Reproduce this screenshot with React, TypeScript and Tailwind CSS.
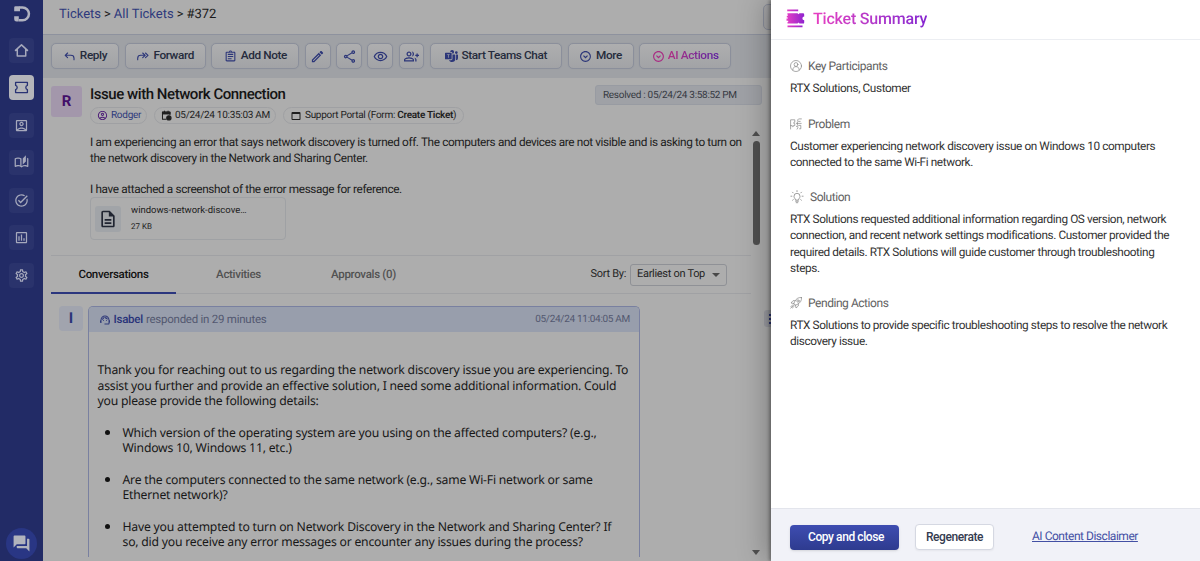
import React from 'react';
import {
  MdOutlineAccountBox,
  MdOutlineAccountCircle,
  MdOutlineAssessment,
  MdOutlineAssignment,
  MdOutlineAutoStories,
  MdOutlineDescription,
  MdOutlineEdit,
  MdOutlineExpandCircleDown,
  MdOutlineGroupAdd,
  MdOutlineRemoveRedEye,
  MdOutlineSettings,
  MdOutlineShare,
  MdQuestionAnswer,
  MdSupportAgent,
  MdTaskAlt,
  MdWebAsset,
} from 'react-icons/md';
import { BsMicrosoftTeams } from 'react-icons/bs';

type IconProps = { className?: string };

const stroke = { fill: 'none', stroke: 'currentColor', strokeLinecap: 'round', strokeLinejoin: 'round' } as const;

const LogoIcon = ({ className }: IconProps) => (
  <svg viewBox="0 0 18 18" className={className} fill="none" stroke="currentColor">
    <path d="M6.500 2.400h3a6.400 6.400 0 0 1 0 12.900H6" strokeWidth="2.500" />
    <path d="M2.500 1.200H7v5H1.200V2.500a1.300 1.300 0 0 1 1.300-1.300zM1.200 11.200h4.600v5.300H3.500a2.300 2.300 0 0 1-2.300-2.300z" fill="currentColor" stroke="none" />
  </svg>
);

const HomeIcon = ({ className }: IconProps) => (
  <svg viewBox="0 0 16 16" className={className} {...stroke} strokeWidth="1.6">
    <path d="M1.600 7.900 8 2l6.400 5.900M3.500 6.700v7.100h9V6.700" />
  </svg>
);

const TicketIcon = ({ className }: IconProps) => (
  <svg viewBox="0 0 16 16" className={className} {...stroke} strokeWidth="1.4">
    <path d="M1.700 2.600h12.600v3.100a2.400 2.400 0 0 0 0 4.600v3.100H1.700v-3.100a2.400 2.400 0 0 0 0-4.600z" />
  </svg>
);

const ReplyIcon = ({ className }: IconProps) => (
  <svg viewBox="0 0 13 13" className={className} {...stroke} strokeWidth="1.1">
    <path d="M4.600 3 2.200 5.300l2.400 2.400M2.400 5.300h5.500c2 0 3.100 1 3.100 2.900v1.600" />
  </svg>
);

const ForwardIcon = ({ className }: IconProps) => (
  <svg viewBox="0 0 13 13" className={className} {...stroke} strokeWidth="1.1">
    <path d="M9.500 3 12 5.300 9.500 7.700M6.700 3l2.500 2.300-2.500 2.400M9 5.300H4.800c-2 0-3.100 1-3.100 2.900v1.600" />
  </svg>
);

const CalendarIcon = ({ className }: IconProps) => (
  <svg viewBox="0 0 12 12" className={className} {...stroke} strokeWidth="1.1">
    <path d="M5.500 10.200H1.600V2.300h8.200v3M1.600 4.200h8.200M3.700 1v1.600M7.700 1v1.600" />
    <path d="M1.600 2.500h8.200v1.600H1.600z" fill="currentColor" />
    <circle cx="8.600" cy="8.600" r="2.400" fill="currentColor" />
  </svg>
);

const SummaryIcon = ({ className }: IconProps) => (
  <svg viewBox="0 0 19 19" className={className}>
    <defs>
      <linearGradient id="summary" x1="0" y1="0" x2="19" y2="0" gradientUnits="userSpaceOnUse">
        <stop offset="0" stopColor="#e83fc4" />
        <stop offset="1" stopColor="#8b22cf" />
      </linearGradient>
    </defs>
    <g fill="url(#summary)">
      <path d="M1.200.5h11v1.700h-11zM1.500 16.600h15v1.700h-15z" />
      <path d="M1.500 4.200h10l1 1 1-1H17a1.200 1.200 0 0 1 1.200 1.200v2.200a1.800 1.800 0 0 0 0 3.600v2.200a1.200 1.200 0 0 1-1.200 1.200h-3.500l-1-1-1 1h-10v-1.600h.7v-1.300H.5V9.600h1.400V8.400H.8V6.800h1.100V5.600h-.7z" />
    </g>
  </svg>
);

const ParticipantIcon = ({ className }: IconProps) => (
  <svg viewBox="0 0 12 12" className={className} {...stroke} strokeWidth=".7">
    <circle cx="6" cy="6" r="5.500" />
    <circle cx="6" cy="4.500" r="1.900" />
    <path d="M2.800 10c0-2.200 1.300-3.400 3.200-3.400S9.200 7.800 9.200 10" />
  </svg>
);

const ProblemIcon = ({ className }: IconProps) => (
  <svg viewBox="0 0 12 12" className={className} {...stroke} strokeWidth=".7">
    <path d="M.6 11V1.800h4.200v2.500c-1.500-.6-1.700 1.900 0 1.300v2H3.400c.6 1.500-1.700 1.500-1.200 0H.6M11.400.9H9.200c-2 0-2 2.700-.2 2.500h1.200M6.400 5.400h4.800M7.400 3.800v3.400M6.300 8.400c1.200-.9 2 .2 1.500 1.300l-.7 1.400M8.600 7.400h2.200v3.400H9.600" />
  </svg>
);

const BulbIcon = () => (
  <svg viewBox="0 0 14 14" className="h-[14px] w-[14px] text-[#858585]" {...stroke} strokeWidth=".8">
    <path d="M5.500 9.700c0-1.100-1.500-1.600-1.500-3.400a3 3 0 0 1 6 0c0 1.800-1.500 2.300-1.500 3.400zM5.600 11.200h2.800M6.200 12.700h1.600M7 .6v1M2.500 2.200l.7.700M11.500 2.200l-.7.700M.9 6.200h1M12.100 6.200h1M2.600 10.200l.7-.6M11.400 10.200l-.7-.6" />
  </svg>
);

const RocketIcon = ({ className }: IconProps) => (
  <svg viewBox="0 0 12 12" className={className} {...stroke} strokeWidth=".7">
    <path d="M11.500.5c-3-.2-5 .8-6.800 4L3.800 6.700l1.500 1.500 2.200-.9c3.200-1.800 4.200-3.800 4-6.800zM5.200 3.700H3L1 6l2.900.5M8.300 6.800V9L6 11l-.5-2.900M3 7.600.6 10M4.400 9 2.400 11M3.500 8.500.8 11.200" />
    <circle cx="8" cy="4" r="1.200" />
  </svg>
);

const NavItem = ({ icon: Icon, active }: { icon: any; active?: boolean }) => (
  <div
    className={
      active
        ? 'flex h-[25px] w-[25px] items-center justify-center rounded bg-[#b4b5ba] text-[#293374]'
        : 'flex h-[25px] w-[25px] items-center justify-center rounded bg-[#2a336c] text-[#a6a9bc]'
    }
  >
    <Icon className="h-[15px] w-[15px]" />
  </div>
);

const ToolButton = ({ icon: Icon, label, width }: { icon: any; label?: string; width: string }) => (
  <button
    className={`${width} flex h-[26px] shrink-0 items-center justify-center gap-[4px] rounded-[5px] border border-[#8b8f9b] bg-linear-to-b from-[#aeaeaf] to-[#a2a3a6] text-[11.8px] font-medium tracking-[-0.38px] whitespace-nowrap text-[#252b3c] shadow-[0_0_1px_#8b8f9b]`}
  >
    <Icon className={label ? 'h-[13px] w-[13px] shrink-0 text-[#2c3679]' : 'h-[15px] w-[15px] shrink-0 text-[#2c3679]'} />
    {label && <span>{label}</span>}
  </button>
);

const Section = ({ icon: Icon, title, className, children }: { icon: any; title: string; className?: string; children: React.ReactNode }) => (
  <section className={className}>
    <div className="flex h-4 items-center gap-1.5 text-[12px] tracking-[-0.45px] text-[#626262]">
      <Icon className="h-3 w-3 text-[#858585]" />
      <h3>{title}</h3>
    </div>
    <p className="mt-[6px] text-[11.8px] leading-[16.400px] tracking-[-0.4px] whitespace-nowrap text-[#333]">{children}</p>
  </section>
);

const Sidebar = () => (
  <aside className="flex w-[43px] shrink-0 flex-col items-center bg-[#222b66] pt-[5px] pb-[2px]">
    <LogoIcon className="h-[18px] w-[18px] text-[#b0b2c0]" />
    <nav className="mt-[14.500px] flex flex-col gap-[12.500px]">
      <NavItem icon={HomeIcon} />
      <NavItem icon={TicketIcon} active />
      <NavItem icon={MdOutlineAccountBox} />
      <NavItem icon={MdOutlineAutoStories} />
      <NavItem icon={MdTaskAlt} />
      <NavItem icon={MdOutlineAssessment} />
      <NavItem icon={MdOutlineSettings} />
    </nav>
    <div className="mt-auto flex h-[31px] w-[31px] items-center justify-center rounded-full bg-[#293684]">
      <MdQuestionAnswer className="h-[19px] w-[19px] text-[#b1b3bd]" />
    </div>
  </aside>
);

const Toolbar = () => (
  <div className="flex h-[44px] items-center gap-[5.700px] border-t border-[#8e929e] bg-[#9fa1a5] pb-px pl-2">
    <ToolButton icon={ReplyIcon} label="Reply" width="w-[68px]" />
    <ToolButton icon={ForwardIcon} label="Forward" width="w-[81px]" />
    <ToolButton icon={MdOutlineAssignment} label="Add Note" width="w-[88px]" />
    <ToolButton icon={MdOutlineEdit} width="w-[25.500px]" />
    <ToolButton icon={MdOutlineShare} width="w-[25.500px]" />
    <ToolButton icon={MdOutlineRemoveRedEye} width="w-[25.500px]" />
    <ToolButton icon={MdOutlineGroupAdd} width="w-[25.500px]" />
    <ToolButton icon={BsMicrosoftTeams} label="Start Teams Chat" width="w-[132px]" />
    <ToolButton icon={MdOutlineExpandCircleDown} label="More" width="w-[66px]" />
    <button className="flex h-[26px] w-[92px] shrink-0 items-center justify-center gap-[3px] rounded-[5px] border border-[#8b8f9b] bg-linear-to-b from-[#aeaeaf] to-[#a2a3a6] text-[11.8px] font-medium tracking-[-0.35px] shadow-[0_0_1px_#8b8f9b]">
      <MdOutlineExpandCircleDown className="h-[13px] w-[13px] text-[#a92b83]" />
      <span className="bg-linear-to-r from-[#b02c83] to-[#5c1aa0] bg-clip-text text-transparent">AI Actions</span>
    </button>
  </div>
);

const pill = 'flex h-[17px] items-center gap-[3px] rounded-full border border-[#9fa0a3] pl-[6px] text-[10px] tracking-[-0.29px] whitespace-nowrap';

const TicketHeader = () => (
  <div className="flex h-[177px] pt-[8px] pl-2">
    <div className="flex h-[31px] w-[31px] shrink-0 items-center justify-center rounded-[3px] bg-[#a397ab] text-[15px] font-bold text-[#420e69]">R</div>
    <div className="ml-2 w-[653px] shrink-0">
      <div className="h-[21px]">
        <h1 className="text-[15px] leading-[17px] font-medium tracking-[-0.45px] whitespace-nowrap text-[#141414]">Issue with Network Connection</h1>
      </div>
      <div className="flex gap-[7px]">
        <span className={`${pill} w-[57px] text-[#2f3a7c]`}>
          <MdOutlineAccountCircle className="h-[11px] w-[11px] text-[#4b1a77]" />
          Rodger
        </span>
        <span className={`${pill} w-[122px] text-[#1e1e1e]`}>
          <CalendarIcon className="h-[11px] w-[11px] shrink-0" />
          05/24/24 10:35:03 AM
        </span>
        <span className={`${pill} w-[181px] text-[#1e1e1e]`}>
          <MdWebAsset className="h-[12px] w-[12px] shrink-0" />
          <span>Support Portal (Form: <b className="font-semibold">Create Ticket</b>)</span>
        </span>
      </div>
      <p className="mt-[11px] text-[11.8px] leading-[15.600px] tracking-[-0.375px] whitespace-nowrap text-[#1c1c1c]">
        I am experiencing an error that says network discovery is turned off. The computers and devices are not visible and is asking to turn on
        <br />
        the network discovery in the Network and Sharing Center.
        <br />
        <br />
        I have attached a screenshot of the error message for reference.
      </p>
      <div className="flex h-[43px] w-[196px] items-center gap-[10px] rounded border border-[#9fa1a4] pl-[4px] text-[#1c1c1c]">
        <div className="flex h-[26px] w-[26px] items-center justify-center rounded-[3px] bg-[#a1a4a8]">
          <MdOutlineDescription className="h-[20px] w-[20px] text-[#202532]" />
        </div>
        <div>
          <div className="text-[9.500px] leading-4">windows-network-discove…</div>
          <div className="text-[8px] leading-4">27 KB</div>
        </div>
      </div>
    </div>
  </div>
);

const Tabs = () => (
  <div className="ml-2 flex h-[39px] w-[700px] border-y border-[#a0a1a4] text-[11.500px] font-medium tracking-[-0.3px] text-[#525252]">
    <div className="-mb-px flex w-[125px] items-center justify-center border-b-2 border-[#2b367e] pt-[2px] text-[#111]">Conversations</div>
    <div className="flex w-[125px] items-center justify-center">Activities</div>
    <div className="flex w-[125px] items-center justify-center">Approvals (0)</div>
    <div className="ml-auto flex items-center gap-1 pr-[24px] text-[11px] font-normal text-[#252525]">
      Sort By:
      <div className="flex h-[22px] w-[97px] items-center justify-between rounded-[3px] border border-[#8f9196] px-[6px] whitespace-nowrap">
        Earliest on Top
        <span className="border-x-4 border-t-[4.500px] border-x-transparent border-t-[#484848]" />
      </div>
    </div>
  </div>
);

const questions = [
  ['Which version of the operating system are you using on the affected computers? (e.g.,', 'Windows 10, Windows 11, etc.)'],
  ['Are the computers connected to the same network (e.g., same Wi-Fi network or same', 'Ethernet network)?'],
  ['Have you attempted to turn on Network Discovery in the Network and Sharing Center? If', 'so, did you receive any error messages or encounter any issues during the process?'],
];

const Conversation = () => (
  <div className="mt-3 flex h-[251px] overflow-hidden pl-4">
    <div className="flex h-[25px] w-[24px] shrink-0 items-center justify-center rounded bg-[#a1a4ae] text-[15px] font-bold text-[#2a3478]">I</div>
    <article className="ml-[4.500px] w-[552.500px] shrink-0 rounded-t-[5px] border border-b-0 border-[#7980a0]">
      <header className="flex h-[25px] items-center rounded-t bg-[#989eac] pr-[9px] pl-[10px] text-[11.500px] tracking-[-0.25px] text-[#535870]">
        <MdSupportAgent className="mr-[3px] h-[12px] w-[12px] text-[#2f3a7a]" />
        <span className="mr-[3px] font-medium text-[#29347a]">Isabel</span> responded in 29 minutes
        <span className="ml-auto text-[10px] tracking-[-0.3px]">05/24/24 11:04:05 AM</span>
      </header>
      <div className="pt-[30px] pl-[9px] font-['Noto_Sans'] text-[12.2px] leading-[15.650px] tracking-[-0.21px] whitespace-nowrap text-[#171717]">
        <p>
          Thank you for reaching out to us regarding the network discovery issue you are experiencing. To
          <br />
          assist you further and provide an effective solution, I need some additional information. Could
          <br />
          you please provide the following details:
        </p>
        <ul className="mt-[15.650px] flex flex-col gap-[15.650px]">
          {questions.map(([first, second]) => (
            <li key={first} className="flex pl-[7px]">
              <span className="mt-[5.500px] mr-[13px] h-[5px] w-[5px] shrink-0 rounded-full bg-[#111]" />
              <span>
                {first}
                <br />
                {second}
              </span>
            </li>
          ))}
        </ul>
      </div>
    </article>
    <div className="mt-[4px] ml-[124px] flex h-[17px] w-[17px] shrink-0 items-center rounded-[3px] bg-[#9b9ca2] pl-[5px]">
      <div className="flex flex-col gap-[2px]">
        <i className="h-[2px] w-[2px] bg-[#2a3478]" />
        <i className="h-[2px] w-[2px] bg-[#2a3478]" />
        <i className="h-[2px] w-[2px] bg-[#2a3478]" />
      </div>
    </div>
  </div>
);

const SummaryDrawer = () => (
  <aside className="relative z-10 flex w-[429px] shrink-0 flex-col bg-white shadow-[-2px_0_3px_rgba(0,0,0,0.3),-6px_0_26px_rgba(0,0,0,0.25)]">
    <header className="flex h-[40px] items-center gap-[8px] border-b border-[#eceef2] pb-[2px] pl-[15px]">
      <SummaryIcon className="h-[19px] w-[19px]" />
      <h2 className="bg-linear-to-r from-[#e83fc1] to-[#8524d0] bg-clip-text text-[16px] font-medium tracking-[-0.2px] text-transparent">Ticket Summary</h2>
    </header>
    <div className="flex-1 pt-[18px] pl-[19px]">
      <Section icon={ParticipantIcon} title="Key Participants" className="h-[58px]">
        RTX Solutions, Customer
      </Section>
      <Section icon={ProblemIcon} title="Problem" className="h-[73px]">
        Customer experiencing network discovery issue on Windows 10 computers
        <br />
        connected to the same Wi-Fi network.
      </Section>
      <Section icon={BulbIcon} title="Solution" className="h-[106px]">
        RTX Solutions requested additional information regarding OS version, network
        <br />
        connection, and recent network settings modifications. Customer provided the
        <br />
        required details. RTX Solutions will guide customer through troubleshooting
        <br />
        steps.
      </Section>
      <Section icon={RocketIcon} title="Pending Actions">
        RTX Solutions to provide specific troubleshooting steps to resolve the network
        <br />
        discovery issue.
      </Section>
    </div>
    <footer className="flex h-[53px] items-center border-t border-[#e3e5ec] bg-[#f1f2f8] pt-[4px] pl-[19px] text-[12px] tracking-[-0.42px]">
      <button className="h-[25px] w-[109px] rounded bg-linear-to-b from-[#3e4db1] to-[#2e3b8f] pl-[3px] font-medium text-white shadow-sm">Copy and close</button>
      <button className="ml-4 h-[26px] w-[79px] rounded border border-[#d5d8e2] bg-white font-medium text-[#343b50] shadow-xs">Regenerate</button>
      <a className="ml-[38px] pb-[2px] tracking-[-0.47px] text-[#4350a4] underline">AI Content Disclaimer</a>
    </footer>
  </aside>
);

export default function App() {
  return (
    <div className="flex h-[561px] w-[1200px] overflow-hidden bg-[#adadad] font-['Roboto',sans-serif] [text-rendering:geometricPrecision]">
      <Sidebar />
      <main className="relative w-[728px] shrink-0 overflow-hidden">
        <div className="flex h-[34px] items-center gap-[3px] pb-[5px] pl-4 text-[13px] text-[#1a1a1a]">
          <span className="text-[#2e397c]">Tickets</span>
          <span>&gt;</span>
          <span className="text-[#2e397c]">All Tickets</span>
          <span>&gt;</span>
          <span>#372</span>
          <button className="mt-[5px] -mr-4 ml-auto h-[26px] w-6 rounded-[5px] border border-[#8b8f9b] bg-[#a5a5a7]" />
        </div>
        <Toolbar />
        <TicketHeader />
        <Tabs />
        <Conversation />
        <div className="absolute top-[85px] left-[552px] flex h-[20px] w-[167px] items-center rounded-[3px] border border-[#989ba2] bg-[#9fa1a6] pl-[7px] text-[10px] tracking-[-0.3px] whitespace-nowrap text-[#363942]">
          Resolved : 05/24/24 3:58:52 PM
        </div>
        <div className="absolute top-[131px] left-[708px] flex h-[424px] w-[10px] flex-col items-center">
          <span className="border-x-[4px] border-b-[5px] border-x-transparent border-b-[#505050]" />
          <span className="mt-[5px] h-[104px] w-[7px] rounded-full bg-[#505050]" />
          <span className="mt-auto border-x-[4px] border-t-[5px] border-x-transparent border-t-[#505050]" />
        </div>
      </main>
      <SummaryDrawer />
    </div>
  );
}
